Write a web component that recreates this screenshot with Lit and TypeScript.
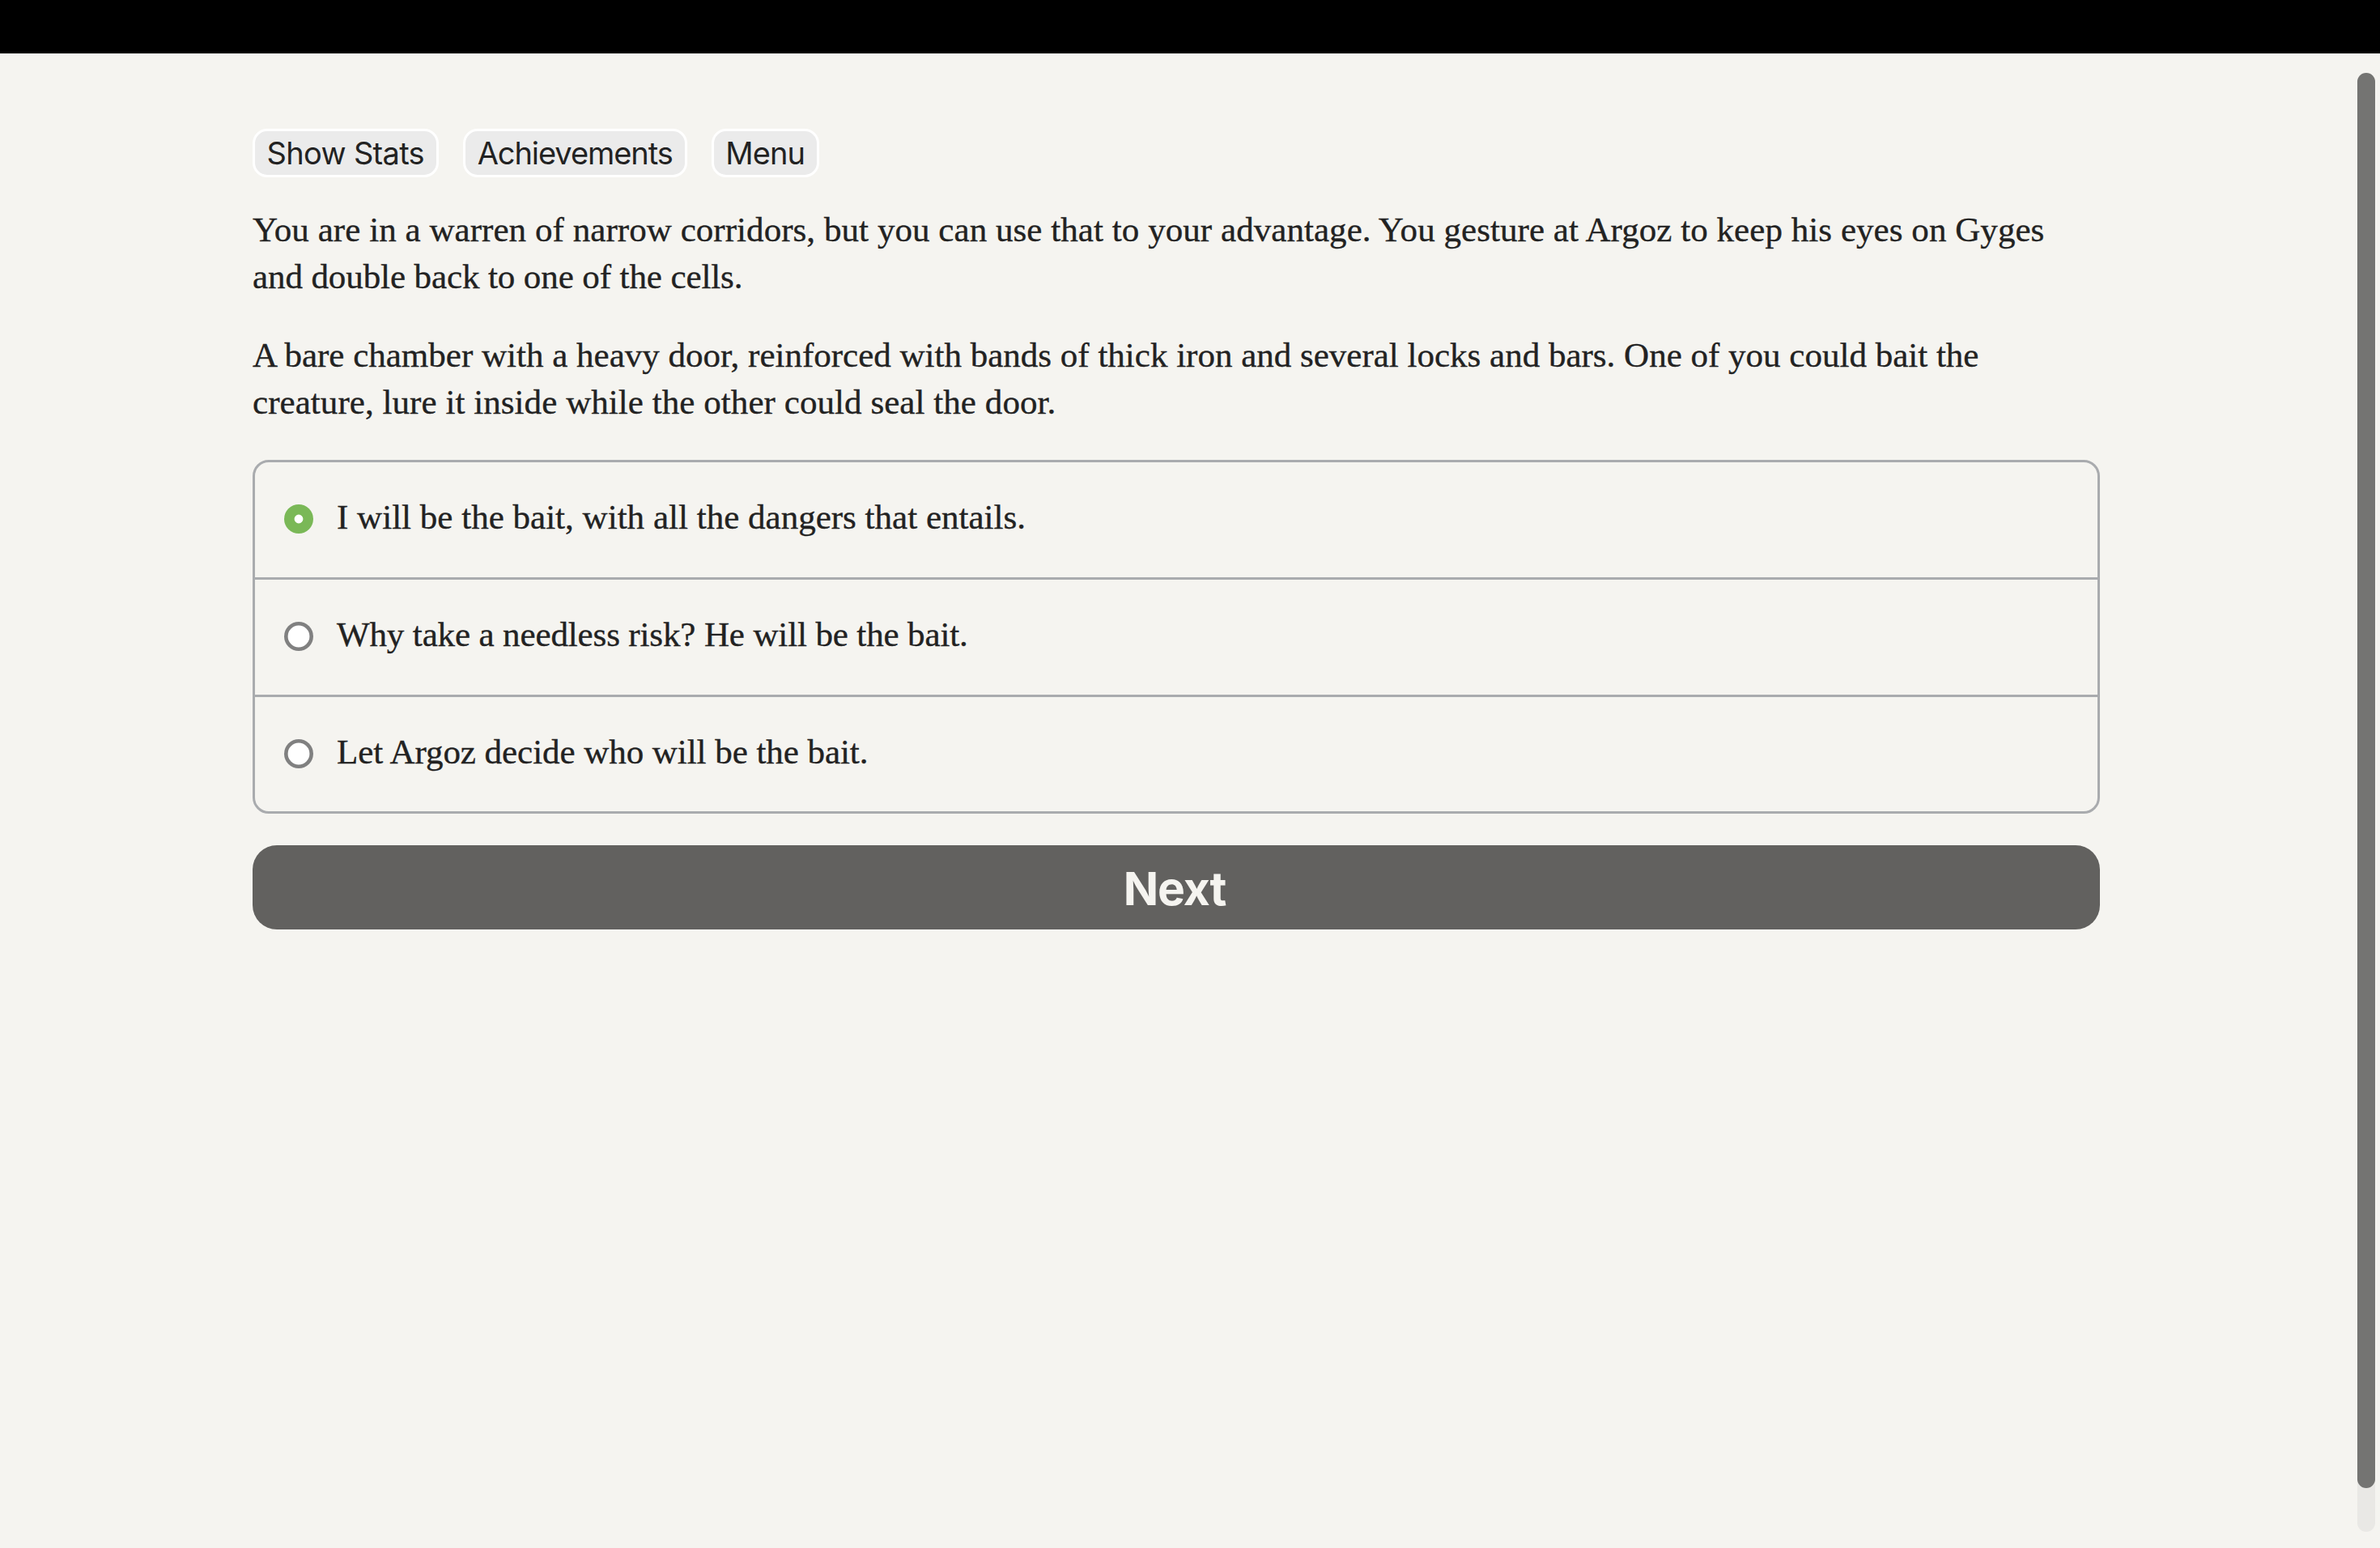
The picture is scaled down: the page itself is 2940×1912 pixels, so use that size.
import { LitElement, css, html, type TemplateResult } from 'lit';
import { customElement, state } from 'lit/decorators.js';
import { classMap } from 'lit/directives/class-map.js';
import { styleMap } from 'lit/directives/style-map.js';

interface TextLine {
  text: string;
  spacing: number;
}

interface ToolbarItem extends TextLine {
  width: number;
}

const TOOLBAR: ToolbarItem[] = [
  { text: 'Show Stats', spacing: -0.69, width: 229.5 },
  { text: 'Achievements', spacing: -1.06, width: 277 },
  { text: 'Menu', spacing: -0.83, width: 132.7 },
];

const PARAGRAPHS: TextLine[][] = [
  [
    {
      text: 'You are in a warren of narrow corridors, but you can use that to your advantage. You gesture at Argoz to keep his eyes on Gyges',
      spacing: 0.055,
    },
    { text: 'and double back to one of the cells.', spacing: -0.1 },
  ],
  [
    {
      text: 'A bare chamber with a heavy door, reinforced with bands of thick iron and several locks and bars. One of you could bait the',
      spacing: 0.003,
    },
    { text: 'creature, lure it inside while the other could seal the door.', spacing: 0.06 },
  ],
];

const CHOICES: TextLine[] = [
  { text: 'I will be the bait, with all the dangers that entails.', spacing: 0.015 },
  { text: 'Why take a needless risk? He will be the bait.', spacing: -0.13 },
  { text: 'Let Argoz decide who will be the bait.', spacing: -0.05 },
];

@customElement('app-root')
export class AppRoot extends LitElement {
  @state() private selected = 0;

  private select(index: number): void {
    this.selected = index;
  }

  private renderLine(line: TextLine): TemplateResult {
    return html`<span class="line" style=${styleMap({ letterSpacing: `${line.spacing}px` })}>${line.text}</span>`;
  }

  private renderChoice(choice: TextLine, index: number): TemplateResult {
    const checked = index === this.selected;
    return html`
      <div class="choice" role="radio" aria-checked=${checked} @click=${() => this.select(index)}>
        <span class=${classMap({ radio: true, checked })}></span>
        <span class="label">${this.renderLine(choice)}</span>
      </div>
    `;
  }

  override render(): TemplateResult {
    return html`
      <div class="topbar"></div>
      <div class="page">
        <main>
          <nav>
            ${TOOLBAR.map((b) => html`
              <button class="tool" style=${styleMap({ width: `${b.width}px`, letterSpacing: `${b.spacing}px` })}>${b.text}</button>
            `)}
          </nav>
          ${PARAGRAPHS.map((lines) => html`<p>${lines.map((l) => this.renderLine(l))}</p>`)}
          <div class="choices" role="radiogroup">
            ${CHOICES.map((c, i) => this.renderChoice(c, i))}
          </div>
          <button class="next">Next</button>
        </main>
        <div class="track"><div class="thumb"></div></div>
      </div>
    `;
  }

  static override styles = css`
    :host {
      display: flex;
      flex-direction: column;
      height: 1912px;
      overflow: hidden;
      background: #f5f4f0;
      color: #222;
      font-family: 'Liberation Serif', serif;
      font-size: 43px;
      line-height: 58px;
    }
    .topbar { height: 66px; flex: none; background: #000; }
    .page {
      flex: 1;
      display: flex;
      justify-content: space-between;
      padding: 24px 6px 20px 312px;
    }
    main { width: 2282px; padding-top: 69px; }
    nav { display: flex; gap: 30.2px; margin-bottom: 36px; }
    button {
      box-sizing: border-box;
      margin: 0;
      padding: 0;
      font-family: Inter, sans-serif;
      white-space: nowrap;
    }
    .tool {
      height: 60px;
      border: 3px solid #fff;
      border-radius: 18px;
      background: #ebebeb;
      color: #222;
      font-size: 38px;
    }
    p { margin: 0 0 39px; }
    .line {
      display: block;
      white-space: nowrap;
      -webkit-text-stroke: 0.35px #222;
    }
    .choices {
      box-sizing: border-box;
      height: 437px;
      margin-top: 42px;
      border: 3px solid #a9abae;
      border-radius: 20px;
    }
    .choice {
      display: flex;
      box-sizing: border-box;
      height: 145px;
      padding: 52px 0 0 36px;
      border-bottom: 3px solid #a9abae;
      line-height: 36px;
    }
    .choice:last-child { height: 141px; border-bottom: 0; }
    /* inset shadows keep the half-pixel ring widths that borders round off */
    .radio {
      width: 36px;
      height: 36px;
      border-radius: 50%;
      background: #fff;
      box-shadow: inset 0 0 0 4.6px #808080;
    }
    .radio.checked { box-shadow: inset 0 0 0 12.6px #7ab857; }
    .label { margin: -2px 0 0 29px; }
    .next {
      display: block;
      width: 100%;
      height: 104px;
      margin-top: 39px;
      padding: 3px 4px 0 0;
      border: 0;
      border-radius: 30px;
      background: #62615f;
      color: #f5f4f0;
      font-size: 57px;
      font-weight: 700;
      letter-spacing: -1.1px;
    }
    .track {
      width: 22px;
      border-radius: 11px;
      background: #e9e8e5;
    }
    .thumb {
      height: 1748px;
      border-radius: 11px;
      background: #747472;
    }
  `;
}

declare global {
  interface HTMLElementTagNameMap {
    'app-root': AppRoot;
  }
}
